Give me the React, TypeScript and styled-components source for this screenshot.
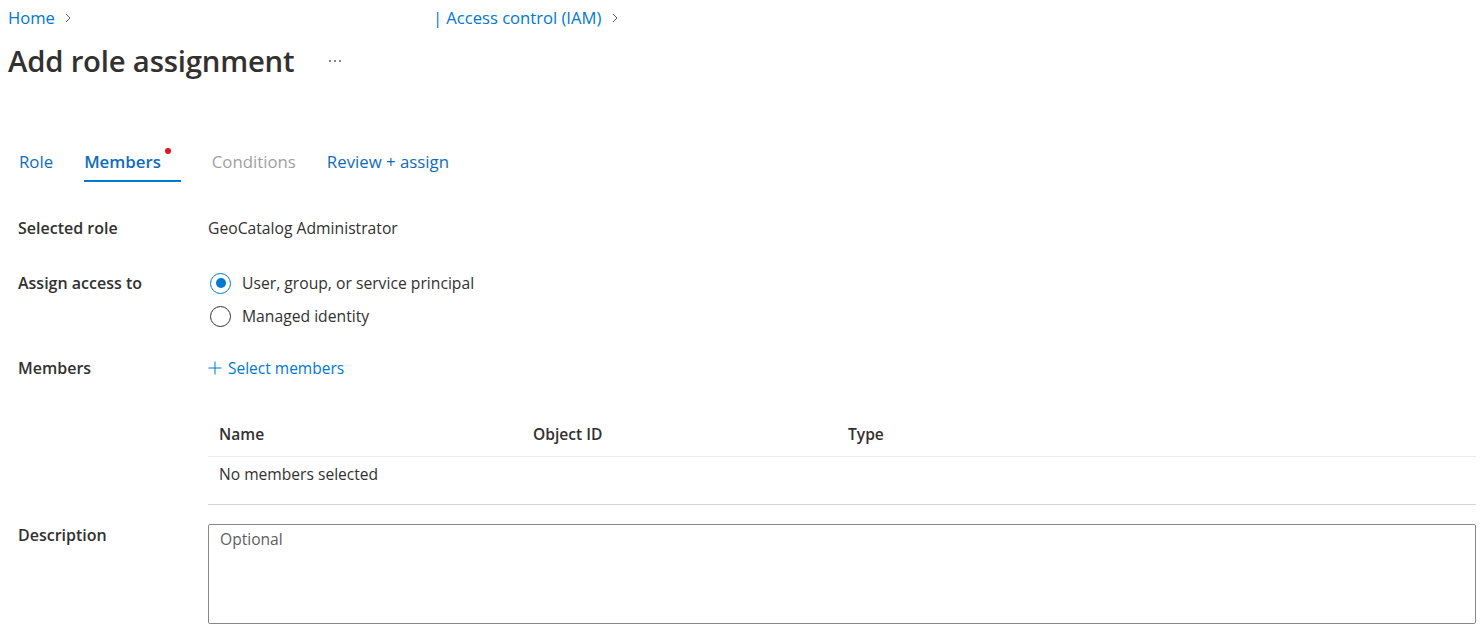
import React from "react";
import styled, { createGlobalStyle } from "styled-components";

const GlobalStyle = createGlobalStyle`
  html, body { margin: 0; padding: 0; background: #ffffff; }
  body { font-family: "Open Sans", "Noto Sans", Arial, sans-serif; color: #323130; font-size: 15.7px; }
  * { box-sizing: border-box; }
`;

const Page = styled.div`
  width: 1480px;
  height: 642px;
  padding: 0 4px 0 8px;
  overflow: hidden;
`;

const Breadcrumb = styled.nav`
  height: 36px;
  display: flex;
  align-items: center;
  font-size: 16.6px;
  line-height: 22px;
`;

const Crumb = styled.a<{ $offset?: number }>`
  color: #0078d4;
  text-decoration: none;
  display: inline-flex;
  align-items: center;
  margin-left: ${(p) => p.$offset ?? 0}px;
`;

const Chevron = styled.span<{ $m?: number }>`
  display: inline-flex;
  align-items: center;
  margin: 0 ${(p) => p.$m ?? 10}px;
`;

const TitleRow = styled.div`
  margin-top: 5px;
  height: 40px;
  display: flex;
  align-items: center;
`;

const Title = styled.h1`
  margin: 0;
  font-size: 29.3px;
  font-weight: 600;
  line-height: 40px;
  color: #323130;
  letter-spacing: -0.2px;
`;

const More = styled.span`
  margin-left: 34px;
  display: inline-flex;
  align-items: center;
`;

const Tabs = styled.div`
  margin-top: 61px;
  display: flex;
  gap: 31px;
  padding-left: 11px;
  height: 40px;
`;

const Tab = styled.div<{ $active?: boolean; $disabled?: boolean; $dot?: boolean }>`
  position: relative;
  height: 40px;
  display: flex;
  align-items: center;
  font-size: 16.8px;
  font-weight: ${(p) => (p.$active ? 600 : 400)};
  color: ${(p) => (p.$disabled ? "#a19f9d" : "#0f6cbd")};
  padding-right: ${(p) => (p.$dot ? 20 : 0)}px;
  border-bottom: 2px solid ${(p) => (p.$active ? "#0078d4" : "transparent")};
  padding-top: 1px;
`;

const Dot = styled.span`
  position: absolute;
  top: 6px;
  right: 10px;
  width: 6px;
  height: 6px;
  border-radius: 50%;
  background: #e81123;
`;

const Form = styled.div`
  padding-left: 10px;
  margin-top: 36px;
  display: flex;
  flex-direction: column;
`;

const FieldRow = styled.div<{ $mt?: number }>`
  display: grid;
  grid-template-columns: 190px 1fr;
  margin-top: ${(p) => p.$mt ?? 0}px;
`;

const Label = styled.div<{ $pt?: number }>`
  font-weight: 600;
  font-size: 16px;
  line-height: 20px;
  padding-top: ${(p) => p.$pt ?? 0}px;
  color: #323130;
`;

const Value = styled.div`
  font-size: 15.7px;
  line-height: 20px;
  color: #323130;
`;

const RadioGroup = styled.div`
  display: flex;
  flex-direction: column;
  gap: 1px;
`;

const RadioOption = styled.label`
  height: 32px;
  display: flex;
  align-items: center;
  gap: 11px;
  padding-left: 2px;
  font-size: 15.7px;
  color: #323130;
`;

const RadioCircle = styled.span<{ $checked?: boolean }>`
  width: 21px;
  height: 21px;
  border-radius: 50%;
  border: 1.5px solid ${(p) => (p.$checked ? "#0078d4" : "#323130")};
  display: inline-flex;
  align-items: center;
  justify-content: center;
  &::after {
    content: "";
    width: 10px;
    height: 10px;
    border-radius: 50%;
    background: ${(p) => (p.$checked ? "#0078d4" : "transparent")};
  }
`;

const AddLink = styled.a`
  display: inline-flex;
  align-items: center;
  gap: 6px;
  color: #0078d4;
  font-size: 15.5px;
  line-height: 20px;
  text-decoration: none;
`;

const TableWrap = styled.div`
  margin-left: 190px;
  margin-top: 32px;
`;

const TableRow = styled.div<{ $head?: boolean }>`
  display: grid;
  grid-template-columns: 314px 315px 1fr;
  height: ${(p) => (p.$head ? 46 : 48)}px;
  align-items: start;
  padding-top: ${(p) => (p.$head ? 13 : 7)}px;
  border-bottom: 1px solid ${(p) => (p.$head ? "#edebe9" : "#d6d4d2")};
`;

const Cell = styled.div<{ $head?: boolean }>`
  padding-left: 11px;
  font-size: 15.6px;
  line-height: 20px;
  font-weight: ${(p) => (p.$head ? 600 : 400)};
  color: #323130;
`;

const TextArea = styled.textarea`
  width: 100%;
  height: 100px;
  border: 1px solid #8a8886;
  border-radius: 2px;
  padding: 4px 11px;
  font-family: "Open Sans", "Noto Sans", Arial, sans-serif;
  font-size: 15.6px;
  line-height: 20px;
  resize: none;
  color: #323130;
  &::placeholder { color: #605e5c; }
`;

const ChevronIcon = () => (
  <svg width="6" height="10" viewBox="0 0 6 10" fill="none">
    <path d="M1 1l4 4-4 4" stroke="#605e5c" strokeWidth="1" />
  </svg>
);

export default function App() {
  return (
    <>
      <GlobalStyle />
      <Page>
        <Breadcrumb>
          <Crumb>Home</Crumb>
          <Chevron>
            <ChevronIcon />
          </Chevron>
          <Crumb $offset={352}>| Access control (IAM)</Crumb>
          <Chevron $m={11}>
            <ChevronIcon />
          </Chevron>
        </Breadcrumb>
        <TitleRow>
          <Title>Add role assignment</Title>
          <More>
            <svg width="14" height="4" viewBox="0 0 14 4">
              <circle cx="2" cy="2" r="1" fill="#605e5c" />
              <circle cx="7" cy="2" r="1" fill="#605e5c" />
              <circle cx="12" cy="2" r="1" fill="#605e5c" />
            </svg>
          </More>
        </TitleRow>
        <Tabs>
          <Tab>Role</Tab>
          <Tab $active $dot>
            Members
            <Dot />
          </Tab>
          <Tab $disabled>Conditions</Tab>
          <Tab>Review + assign</Tab>
        </Tabs>
        <Form>
          <FieldRow>
            <Label>Selected role</Label>
            <Value>GeoCatalog Administrator</Value>
          </FieldRow>
          <FieldRow $mt={29}>
            <Label $pt={6}>Assign access to</Label>
            <RadioGroup>
              <RadioOption>
                <RadioCircle $checked />
                User, group, or service principal
              </RadioOption>
              <RadioOption>
                <RadioCircle />
                Managed identity
              </RadioOption>
            </RadioGroup>
          </FieldRow>
          <FieldRow $mt={26}>
            <Label>Members</Label>
            <Value>
              <AddLink>
                <svg width="14" height="14" viewBox="0 0 14 14">
                  <path d="M7 0.5v13M0.5 7h13" stroke="#0078d4" strokeWidth="1" />
                </svg>
                Select members
              </AddLink>
            </Value>
          </FieldRow>
          <TableWrap>
            <TableRow $head>
              <Cell $head>Name</Cell>
              <Cell $head>Object ID</Cell>
              <Cell $head>Type</Cell>
            </TableRow>
            <TableRow>
              <Cell>No members selected</Cell>
              <Cell />
              <Cell />
            </TableRow>
          </TableWrap>
          <FieldRow $mt={19}>
            <Label $pt={1}>Description</Label>
            <TextArea placeholder="Optional" />
          </FieldRow>
        </Form>
      </Page>
    </>
  );
}
